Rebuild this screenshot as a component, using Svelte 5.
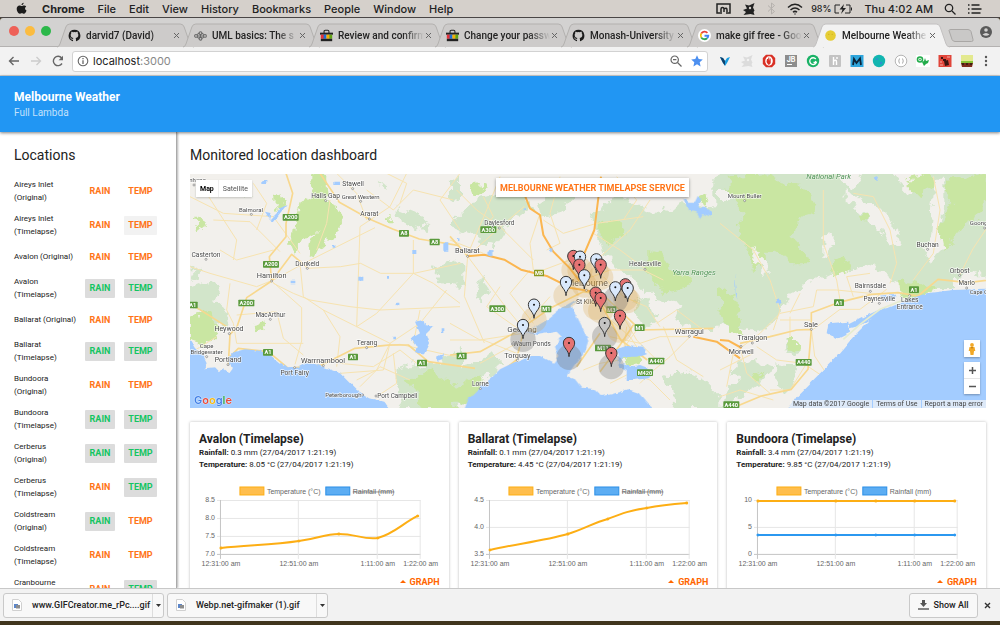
<script>
  const menus = ['File', 'Edit', 'View', 'History', 'Bookmarks', 'People', 'Window', 'Help'];

  const tabs = [
    { icon: 'github', title: 'darvid7 (David)' },
    { icon: 'uml', title: 'UML basics: The s' },
    { icon: 'bag', title: 'Review and confirm' },
    { icon: 'bag', title: 'Change your passw' },
    { icon: 'github', title: 'Monash-University' },
    { icon: 'google', title: 'make gif free - Goo' },
    { icon: 'sun', title: 'Melbourne Weathe', active: true }
  ];

  const extensions = ['vee', 'cat', 'opera', 'jb', 'gram', 'honey', 'm', 'teal', 'json', 'sprout', 'red', 'grass'];

  const locations = [
    { name: 'Aireys Inlet (Original)' },
    { name: 'Aireys Inlet (Timelapse)', hover: true },
    { name: 'Avalon (Original)' },
    { name: 'Avalon (Timelapse)', rain: true, temp: true },
    { name: 'Ballarat (Original)' },
    { name: 'Ballarat (Timelapse)', rain: true, temp: true },
    { name: 'Bundoora (Original)' },
    { name: 'Bundoora (Timelapse)', rain: true, temp: true },
    { name: 'Cerberus (Original)', rain: true, temp: true },
    { name: 'Cerberus (Timelapse)', temp: true },
    { name: 'Coldstream (Original)', rain: true },
    { name: 'Coldstream (Timelapse)' },
    { name: 'Cranbourne (Original)', temp: true }
  ];

  const cards = [
    {
      name: 'Avalon (Timelapse)', rain: '0.3 mm', temp: '8.05 °C', struck: true,
      ticks: [['8.5', 20], ['8.0', 38], ['7.5', 56], ['7.0', 74]],
      lines: [{ color: '#fdae14', d: 'M31 68C57 65 83 65 109 61C128 59 134 54 149 54C166 54 174 60 188 58C204 54 212 44 228 36', pts: [[31, 68], [109, 61], [149, 54], [188, 58], [228, 36]] }]
    },
    {
      name: 'Ballarat (Timelapse)', rain: '0.1 mm', temp: '4.45 °C', struck: true,
      ticks: [['4.5', 20], ['4.0', 47], ['3.5', 74]],
      lines: [{ color: '#fdae14', d: 'M31 70C57 64 84 61 109 54C126 49 134 43 149 39C162 34 172 30 188 28C202 25 214 24 228 23', pts: [[31, 70], [109, 54], [149, 39], [188, 28], [228, 23]] }]
    },
    {
      name: 'Bundoora (Timelapse)', rain: '3.4 mm', temp: '9.85 °C', struck: false,
      ticks: [['10', 20], ['5', 47], ['0', 74]],
      lines: [
        { color: '#fdae14', d: 'M31 21H228', pts: [[31, 21], [109, 21], [149, 21], [188, 21], [228, 21]] },
        { color: '#2b98f0', d: 'M31 55H228', pts: [[31, 55], [109, 55], [149, 55], [188, 55], [228, 55]] }
      ]
    }
  ];

  const times = [['12:31:00 am', 31], ['12:51:00 am', 109], ['1:11:00 am', 188], ['1:22:00 am', 231]];

  const west = {
    labels: [
      ['Stawell', 519, 138, 20], ['Halls Gap', 437, 173, 20], ['Great Western', 542, 176, 18], ['Balmoral', 213, 217, 18],
      ['Ararat', 568, 229, 20], ['Casterton', 78, 350, 20], ['Dunkeld', 382, 377, 20], ['Hamilton', 275, 415, 22],
      ['MacArthur', 271, 531, 19], ['Heywood', 147, 573, 21], ['Cape', 80, 624, 18], ['Bridgewater', 80, 642, 18],
      ['Portland', 144, 665, 21], ['Terang', 561, 615, 20], ['Warrnambool', 429, 668, 22], ['Port Fairy', 344, 704, 20],
      ['Peterborough', 490, 770, 18], ['Port Campbell', 652, 775, 19], ['enhope', 48, 126, 18]
    ],
    shields: [['A200', 332, 232], ['A200', 273, 373], ['A200', 199, 489], ['A8', 672, 280], ['A8', 764, 306], ['A1', 264, 637], ['A1', 519, 651], ['A1', 726, 669], ['A1', 38, 495]],
    dots: [[518, 146], [437, 182], [542, 184], [214, 223], [568, 237], [78, 358], [382, 385], [275, 423], [271, 538], [148, 581], [144, 674], [560, 623], [430, 677], [344, 683], [548, 765], [588, 768], [42, 135], [80, 650]]
  };
  const middle = {
    labels: [
      ['Daylesford', 148, 166, 19], ['Ballarat', 52, 249, 22], ['Healesville', 585, 289, 20], ['Melbourne', 412, 349, 26],
      ['St Kilda', 412, 403, 20], ['Geelong', 216, 487, 24], ['Waurn Ponds', 246, 528, 19], ['Torquay', 202, 563, 22],
      ['Lorne', 91, 648, 20], ['Warragul', 718, 491, 22]
    ],
    shields: [['A300', 115, 179], ['A300', 142, 416], ['M1', 289, 417], ['A1', 35, 558], ['M1', 569, 473], ['A440', 619, 573], ['M420', 585, 608], ['M11', 459, 534], ['M3', 484, 419], ['M8', 267, 309]],
    dots: [[148, 174], [53, 259], [585, 298], [409, 361], [718, 499], [202, 571], [91, 656], [188, 522]]
  };
  const east = {
    labels: [
      ['Mount Buller', 74, 84, 18], ['Buchan', 623, 231, 20], ['Orbost', 719, 308, 20], ['Marlo', 740, 346, 19],
      ['Bairnsdale', 451, 355, 20], ['Paynesville', 478, 392, 19], ['Lakes', 569, 397, 20], ['Entrance', 569, 416, 20],
      ['Sale', 273, 470, 22], ['Traralgon', 97, 511, 21], ['Morwell', 64, 551, 21], ['Goong', 776, 166, 18], ['Cape C', 776, 372, 17]
    ],
    shields: [['A1', 357, 398], ['A1', 582, 359], ['A440', 251, 577], ['A440', 34, 704]],
    dots: [[74, 92], [623, 238], [719, 316], [740, 354], [451, 364], [478, 400], [569, 377], [274, 478], [97, 519], [63, 529], [794, 174]]
  };

  const zones = [
    [372, 300, 'o'], [390, 300, 'o'], [439, 308, 'o'], [452, 322, 'o'], [403, 345, 'o'], [348, 377, 'o'], [437, 412, 'o'],
    [452, 422, 'o'], [526, 385, 'o'], [533, 392, 'o'], [496, 390, 'g'], [252, 450, 'o'], [219, 508, 'g'], [464, 500, 'g'],
    [508, 480, 'o'], [357, 562, 'g'], [484, 590, 'g']
  ];
  const pins = [
    [370, 258, 'r'], [390, 260, 'w'], [388, 284, 'r'], [439, 268, 'w'], [452, 284, 'r'], [403, 316, 'w'], [348, 336, 'w'],
    [437, 368, 'r'], [452, 384, 'r'], [526, 343, 'r'], [496, 352, 'w'], [533, 354, 'w'], [252, 404, 'w'], [219, 465, 'w'],
    [464, 459, 'g'], [510, 437, 'r'], [357, 519, 'r'], [484, 549, 'r']
  ];
  const pinFill = { r: '#e57373', w: '#d9e8fb', g: '#c4c4c4' };

  const downloads = ['www.GIFCreator.me_rPc....gif', 'Webp.net-gifmaker (1).gif'];
</script>

{#snippet places(set)}
  {#each set.shields as [t, x, y]}
    <rect x={x - (t.length > 2 ? 24 : 15)} y={y - 10} width={t.length > 2 ? 48 : 30} height="20" rx="2" fill={t === 'M8' ? '#8b9a22' : '#5a9a3c'} />
    <text class="shield" {x} y={y + 6}>{t}</text>
  {/each}
  {#each set.dots as [x, y]}
    <circle cx={x} cy={y} r="3" fill="#fff" stroke="#777" stroke-width="2" />
  {/each}
  {#each set.labels as [t, x, y, size]}
    <text class="place" {x} {y} font-size={size}>{t}</text>
  {/each}
{/snippet}

{#snippet tabIcon(name)}
  <svg class="fav" viewBox="0 0 16 16" aria-hidden="true">
    {#if name === 'github'}
      <path fill="#1b1b1b" d="M8 .8a7.3 7.3 0 0 0-2.3 14.2c.4.1.5-.2.5-.4v-1.5c-2 .4-2.5-.5-2.7-1 0-.2-.4-.8-.8-1-.3-.1-.7-.5 0-.5.6 0 1.100.6 1.200.8.7 1.200 1.900.9 2.300.7.1-.5.300-.9.500-1.100-1.700-.2-3.400-.8-3.400-3.700 0-.8.300-1.500.800-2-.100-.200-.400-1 .100-2 0 0 .600-.200 2 .700a7 7 0 0 1 3.600 0c1.400-1 2-.700 2-.700.500 1 .200 1.800.100 2 .500.500.800 1.200.800 2 0 2.900-1.700 3.500-3.400 3.700.300.200.500.700.500 1.400v2.200c0 .2.1.5.500.4A7.300 7.300 0 0 0 8 .8z" />
    {:else if name === 'uml'}
      <g fill="none" stroke="#666" stroke-width="1.300"><circle cx="2.500" cy="8.500" r="1.700" /><circle cx="13.500" cy="8.500" r="1.700" /><circle cx="8" cy="5" r="1.700" /><circle cx="8" cy="12" r="1.700" /><path d="M4 8.500h8M8 7v3M4 7l2-2M12 7l-2-2M4 10l2 1.500M12 10l-2 1.500" /></g>
    {:else if name === 'bag'}
      <path d="M5 5V3q0-1.500 1.500-1.500h3Q11 1.500 11 3v2" fill="none" stroke="#222" stroke-width="1.300" />
      <path fill="#222" d="M0 4.500h16V7H0z" /><path fill="#e53238" d="M1 7h4v5H1z" /><path fill="#1f6fd6" d="M4.500 7H8v5H4.500z" /><path fill="#f5af02" d="M8 7h4v5H8z" /><path fill="#62a516" d="M11.500 7H15v5h-3.500z" /><path fill="#222" d="M1 12h14v3H1z" />
    {:else if name === 'google'}
      <circle cx="8" cy="8" r="8" fill="#fff" /><g fill="none" stroke-width="2.200"><path stroke="#ea4335" d="M4 5.500a4.800 4.800 0 0 1 7.600-.8" /><path stroke="#fbbc05" d="M4 5.500a5 5 0 0 0 0 5" /><path stroke="#34a853" d="M4 10.500a4.800 4.800 0 0 0 7.200.9" /><path stroke="#4285f4" d="M8 8.300h4.700q0 2-1.500 3.100" /></g>
    {:else}
      <circle cx="8" cy="8" r="6.500" fill="#e6cd35" /><circle cx="6" cy="6.500" r=".6" fill="#b89600" /><circle cx="10" cy="6.500" r=".6" fill="#b89600" />
    {/if}
  </svg>
{/snippet}

<div class="screen">
  <nav class="menubar" aria-label="System menu">
    <svg class="apple" viewBox="0 0 16 18" aria-hidden="true"><path d="M11.200.5c.1 1.800-1.500 3.500-3.200 3.400C7.800 2.200 9.500.6 11.200.5zM14.800 6c-2.500 1.500-2 5 .5 6-.8 2.200-2.200 4.700-3.700 4.700-1.200 0-1.600-.8-3.100-.8s-2 .8-3.100.8C3.300 16.700 1 12.800 1 9.500c0-3 1.900-4.800 4-4.800 1.400 0 2.400.8 3.300.8.800 0 2-.9 3.700-.9 1.100 0 2.200.6 2.800 1.400z" /></svg>
    <b>Chrome</b>
    {#each menus as m}<span>{m}</span>{/each}
    <div class="status">
      <svg width="15" height="12" viewBox="0 0 15 12" fill="none" stroke="#222" stroke-width="1.500" aria-hidden="true"><path d="M4 10H1V1h13v9h-2M5 11V6q0-1.500 1.500-1.500T8 6v3M8 6q3-2 3 1v4" /></svg>
      <svg width="14" height="14" viewBox="0 0 14 14" aria-hidden="true"><path d="M3 2.500l4 1L12.500 1 11 5.500l1.500 3-1 1.500 1 3-4-1-7 1L4 10 1 8l4-1.500z" fill="#222" /><circle cx="8" cy="6" r="1.200" fill="#d5d0cb" /></svg>
      <svg width="9" height="13" viewBox="0 0 9 13" fill="none" stroke="#b5b1ad" aria-hidden="true"><path d="M1 3.500l6.500 6L4.500 12V1l3 2.500-6.500 6" /></svg>
      <svg width="16" height="12" viewBox="0 0 16 12" fill="none" stroke="#222" stroke-width="1.500" aria-hidden="true"><path d="M1 4.500q7-6.500 14 0M3.500 7q4.500-4 9 0M6 9.300q2-1.800 4 0" /><circle cx="8" cy="11" r=".7" fill="#222" stroke="none" /></svg>
      <span class="battery">98%<svg width="19" height="10" viewBox="0 0 19 10" aria-hidden="true"><path d="M6 1H1v8h4M12 1h4v8h-5M17.500 3.500v3" fill="none" stroke="#222" /><path d="M10 0L5.500 5.500h3L7 10l5-6H9z" fill="#222" /></svg></span>
      <time>Thu 4:02 AM</time>
      <svg width="12" height="12" viewBox="0 0 12 12" fill="none" stroke="#222" stroke-width="1.300" aria-hidden="true"><circle cx="5" cy="5" r="3.700" /><path d="M8 8l3.500 3.500" /></svg>
      <svg width="15" height="10" viewBox="0 0 15 10" fill="none" stroke="#222" stroke-width="1.500" aria-hidden="true"><path d="M1 1h1.500M1 5h1.500M1 9h1.500M4.500 1h8M4.500 5h10M4.500 9h9" /></svg>
    </div>
  </nav>

  <div class="tabstrip">
    <div class="lights"><i class="close"></i><i class="mini"></i><i class="full"></i></div>
    <div class="tabs">
      {#each tabs as t}
        <div class="tab" class:active={t.active}>
          <svg class="shape" viewBox="0 0 140 23" preserveAspectRatio="none" aria-hidden="true"><path d="M0 23q2 0 3-3L9 3q1-3 4-3h112q3 0 4 3l6 17q1 3 4 3" /></svg>
          {@render tabIcon(t.icon)}
          <span class="title">{t.title}</span>
          <button class="x" aria-label="Close tab"><svg width="7" height="7" viewBox="0 0 7 7"><path d="M1 1l5 5M6 1L1 6" stroke="#666" /></svg></button>
        </div>
      {/each}
    </div>
    <svg class="newtab" viewBox="0 0 26 13" aria-hidden="true"><path d="M1 1.500Q1 .5 3 .5h17q2 0 3 2l2 8q.5 2-1.500 2H7q-2 0-3-2z" fill="#c9c8c7" stroke="#a9a7a5" /></svg>
    <svg class="user" viewBox="0 0 12 12" aria-hidden="true"><circle cx="6" cy="6" r="6" fill="#5a5a5a" /><circle cx="6" cy="4" r="1.800" fill="#d3d2d1" /><path d="M2.500 8.500q3.500-3 7 0-3.500 2.500-7 0z" fill="#d3d2d1" /></svg>
  </div>

  <div class="toolbar">
    <button aria-label="Back"><svg width="12" height="10" viewBox="0 0 12 10"><path d="M11 5H1.500M5.500 1l-4 4 4 4" fill="none" stroke="#666" stroke-width="1.400" /></svg></button>
    <button aria-label="Forward"><svg width="12" height="10" viewBox="0 0 12 10"><path d="M1 5h9.500M6.500 1l4 4-4 4" fill="none" stroke="#ccc" stroke-width="1.400" /></svg></button>
    <button aria-label="Reload"><svg width="12" height="12" viewBox="0 0 12 12"><path d="M10 8.500A4.700 4.700 0 1 1 9.700 3" fill="none" stroke="#666" stroke-width="1.400" /><path d="M11 .8v4.400H6.600z" fill="#666" /></svg></button>
    <div class="omnibox">
      <svg width="12" height="12" viewBox="0 0 12 12" aria-hidden="true"><circle cx="6" cy="6" r="4.800" fill="none" stroke="#666" stroke-width="1.100" /><path d="M6 5.200V9M6 3v1.300" stroke="#666" stroke-width="1.300" /></svg>
      <a class="url" href="#top">localhost<span>:3000</span></a>
      <svg class="push" width="12" height="12" viewBox="0 0 12 12" fill="none" stroke="#666" stroke-width="1.200" aria-hidden="true"><circle cx="4.700" cy="4.700" r="3.700" /><path d="M7.500 7.500l4 4M3 4.700h3.400" /></svg>
      <svg width="12" height="12" viewBox="0 0 12 12" aria-hidden="true"><path fill="#4d90f0" d="M6 .3l1.700 3.800 4.100.4-3.100 2.800.9 4.100L6 9.200l-3.600 2.200.9-4.100L.2 4.500l4.100-.4z" /></svg>
    </div>
    <div class="extensions">
      {#each extensions as e}
        <svg viewBox="0 0 14 14" aria-hidden="true">
          {#if e === 'vee'}<path d="M2 3l3 1 2 3 2-3 3-1-3 6-2 3-2-3z" fill="#1b9de0" /><path d="M2 3l3 1 2 3v4.500L5 9z" fill="#10406b" />
          {:else if e === 'cat'}<path d="M3 2.500l4 1L12.500 1 11 5.500l1.500 3-1 1.500 1 3-4-1-7 1L4 10 1 8l4-1.500z" fill="#dcdcdc" /><circle cx="8" cy="6" r="1.200" fill="#f2f2f2" />
          {:else if e === 'opera'}<path d="M4 .8h6L13.200 4v6L10 13.200H4L.8 10V4z" fill="#d93025" /><ellipse cx="7" cy="7" rx="3.800" ry="4.700" fill="#fff" /><path d="M5 5h1v2l.3-3.500h1V7l.6-2.500h.8V9q-1 2.500-2.700 1.500L4.500 8z" fill="#d93025" />
          {:else if e === 'jb'}<path d="M1 1h12v12H1z" fill="#8d8d8d" /><text x="7" y="8" class="glyph" font-size="7">JB</text><path d="M3 10.500h5" stroke="#fff" />
          {:else if e === 'gram'}<circle cx="7" cy="7" r="6.200" fill="#19b266" /><path d="M9.800 5a3.400 3.400 0 1 0 .5 3.500H7.500M10.300 8.500l-1-1.500" fill="none" stroke="#fff" stroke-width="1.300" />
          {:else if e === 'honey'}<rect x="1" y="1" width="12" height="12" rx="1" fill="#c3c3c3" /><path d="M5.500 3v8M5.500 7q3-2 3 1v3M9 3v2" stroke="#fff" stroke-width="1.400" fill="none" />
          {:else if e === 'm'}<path d="M.5 1h13v12H.5z" fill="#2ea5dc" /><path d="M3 11l1-6 2.500 4L10 4.500l1 6.500" fill="none" stroke="#0a2338" stroke-width="1.800" />
          {:else if e === 'teal'}<circle cx="7" cy="7" r="6.200" fill="#12b5b0" /><circle cx="5" cy="5" r="1" fill="#2f8fd0" /><circle cx="9" cy="9" r="1.200" fill="#2f8fd0" />
          {:else if e === 'json'}<circle cx="7" cy="7" r="5.800" fill="#fff" stroke="#b5b5b5" /><path d="M5.500 4.500Q4 7 5.500 9.500M8.500 4.500Q10 7 8.500 9.500" fill="none" stroke="#aaa" />
          {:else if e === 'sprout'}<path d="M0 1h14v12H0z" fill="#fff" /><circle cx="4" cy="5.500" r="2.500" fill="none" stroke="#22ac4b" stroke-width="1.600" /><path d="M6 8l2 4 2-2 2-1 1-3-3 1-1-3-1 3z" fill="#22ac4b" /><circle cx="4" cy="5.500" r=".9" fill="#22ac4b" />
          {:else if e === 'red'}<path d="M.5 1h13v12H.5z" fill="#e0453a" /><path d="M3 3h2v2H3zM5 5h3v2H5zM6 7l4-1 1 5-4 1z" fill="#3a1512" /><path d="M2 8h2M9 3h3M2 11h3" stroke="#f6b0a8" />
          {:else}<path d="M1 1h12v6H1z" fill="#e3e98f" /><path d="M1 7h12v3H1z" fill="#8ac53a" /><path d="M1 9h12l-1 4H2z" fill="#7c2c1c" /><path d="M3 9v2M7 9v2M11 9v2" stroke="#2d1a10" stroke-width="1.500" />{/if}
        </svg>
      {/each}
    </div>
    <button class="more" aria-label="Menu"><svg width="4" height="12" viewBox="0 0 4 12" fill="#555"><circle cx="2" cy="2" r="1.200" /><circle cx="2" cy="6" r="1.200" /><circle cx="2" cy="10" r="1.200" /></svg></button>
  </div>

  <div class="page" id="top">
    <header>
      <h1>Melbourne Weather</h1>
      <p>Full Lambda</p>
    </header>
    <div class="body">
      <aside>
        <h2>Locations</h2>
        <ul>
          {#each locations as l}
            <li>
              <span>{l.name}</span>
              <button class:on={l.rain}>RAIN</button>
              <button class:on={l.temp} class:hover={l.hover}>TEMP</button>
            </li>
          {/each}
        </ul>
      </aside>

      <main>
        <h2>Monitored location dashboard</h2>
        <div class="map">
          <svg class="canvas" viewBox="0 0 2388 702" preserveAspectRatio="xMidYMid slice" role="img" aria-label="Map of Victoria">
            <defs>
              <filter id="rough" x="-5%" y="-5%" width="110%" height="110%">
                <feTurbulence type="fractalNoise" baseFrequency="0.03" numOctaves="4" seed="4" />
                <feDisplacementMap in="SourceGraphic" scale="46" xChannelSelector="R" yChannelSelector="G" />
              </filter>
              <filter id="coast" x="-5%" y="-5%" width="110%" height="110%">
                <feTurbulence type="fractalNoise" baseFrequency="0.04" numOctaves="3" seed="9" />
                <feDisplacementMap in="SourceGraphic" scale="12" xChannelSelector="R" yChannelSelector="G" />
              </filter>
            </defs>
            <rect width="2388" height="702" fill="#f2f0ec" />

            <g filter="url(#rough)">
              <g transform="translate(-30 -102)">
                <path class="wood" d="M30 440l60-20 30 20-20 40 40 30 10 50-50-10-70-50zM650 200l50 20 40 20-10 30-40-10-40-30zM810 130l30-20v70l-30-10zM760 380l60-20 30 20v60l-40-10-40-10zM640 690l60-20 50 10 90-50v180H660l-10-60zM180 160l30-10 5 15-25 8zM30 380l30 20-20 20zM590 120l30 10-10 20z" />
                <path class="park" d="M385 100h50l5 80 25 20 25 45-25 45-20 5-20 30-15 30-30 5 10-70 30-25-30 15-25 20-20 40-15-35 10-60 10-45 30-20 25-15-20-45zM30 530l60-15 30 60-40 40-50-15zM280 165l25-5 5 25-15 25-15-20zM215 550l40-10 5 30-30 10zM35 240l30-10 10 25-25 20zM690 720l70-30 50 40 30 10v70H730zM615 235h20v15h-20z" />
              </g>
              <g transform="translate(780 -12)">
                <path class="wood" d="M30 130l60-50 70-10 70 10 20 40-60 20-50 80-60-10-30-20-50-20zM260 90l80-30 30 20-40 50-60 10zM420 130l100-50 100 50 70-30 130 20 50 200v130l-80 30-60 0-50-30 20-50-80-10-60-60-60-40-40-40zM70 380l30-70 20 60-30 30zM0 620l80-50 50-20 30 30-60 50-70 80H0zM640 620l60-20 60 30 60 60v30H680zM550 380l50 20 20 60-40 20z" />
                <path class="park" d="M440 170l40-20 50 30-30 30-40 10zM595 240l40 10 30 50 60 30-20 30-60 10-50-50zM0 655l50-20 40-20 10 30-30 50H0zM740 70l30 10 10 30-40-20zM515 555l50 5 5 25-40 5zM60 50l40-10 10 20-40 15z" />
              </g>
              <g transform="translate(1590 -12)">
                <path class="wood" d="M0 0h330l70 60 40-60h70l60 70 50-70h200v320l-80-20-50 60-120 0-100-60-30-10-70 10-40 10-60 30-60 30-20 40-40 60-40 20-60-20L-20 450V20zM30 600l60-30 60 20-20 50-50 30zM190 510l40 0 10 30-40 20zM30 640l50-10 0 40-60 30zM160 580l60 10 10 50-30 30-30-20z" />
                <path class="park" d="M30 20l100-10 60 30 70 10 30 60-60 40-10 60 40 40 10 30-60 0-50-40-60 60-20-70-30-50 30-50-60-60zM560 20l70-10 20 40-50 30-30-30zM680 30l120-20v120l-60 30-70 80-10-60 40-90-30-30zM340 260l40 10 0 40-40 10zM420 130l25-5v25l-20 5zM0 350l40 20 20 60 10 60-50 0L0 420zM195 510l40 0 5 25-35 5zM100 610l30-5 0 20-20 5zM530 330l70 10 60 20-60 30-60-10z" />
                <path class="gap" d="M380 60l40 30 50 20 60 60 10 50-30 10-40-60-30-40-60-30zM645 20h25v80l-10 80 10 50-40 40-20-10 20-60zM100 230l40 50 0 50-40-60zM310 210l35-10-5 40-30 20zM0 60l30 0 0 30-30 0z" />
              </g>
            </g>

            <g class="roads">
              <g transform="translate(-30 -102)">
                <path d="M30 170l100 50 150 10 80 110M30 380l60 20 140 40 50-20M120 330l50 30 110-30M60 130l110 170-10 60M280 430l60 30 50 20 120 20 90 10 240-10M382 385l100-5 60-10 60 30 100 0 140-30M275 423l110-60 200-100M275 423l90 80 0 100-20 70M100 240l110 5 90 90M530 560l-100-50-60-40-10-100M530 560l10-300 90-60 50-100M530 560l60-40 110-120 0-100M530 560l100 50-40 80-60 30M450 180l-10 70-30 80M150 430l-10 80 20 40 10 60 200 0M170 525l120-10 20 80 60 50M430 510l50 80-10 90M630 610l90-60 80-100M630 610l-20 80-130 10M700 400l60 30 80 60M470 100l60 60 30 80M560 150l80 60 60-60 120 30M620 100l60 30-20 60M840 100l-60 80 60 90M480 670l100 10 80-50 50 40M560 623l100-10 180 40M540 740l60-60 90 40M30 640l80-50M220 130l40 60-30 80M640 640l10 90-60 40M700 610l20-100" />
                <path class="main" d="M318 100l20 60-20 90 0 40-50 60 7 73M275 423l-75 50-30 90-20 20-5 90M275 423l60-80 47 40M145 655l30-30 90 10 60 50 100-10 100-50 100-10 60 0 60 50 140 20M568 237l70 30 80 30 120 20M568 237l-90-50-60-90M30 490l110 70" />
              </g>
              <g transform="translate(780 -12)">
                <path d="M53 259l100-90 70-60M53 259l-10 120 60 140M53 259l120 160 50 60M20 60l60 60 70 50 100 100M150 20l-40 100-60 140M280 150l60 40 100-30 140-20M270 130l-30 90 10 80M330 20l-30 110 30 90-40 20M400 240l-40 30-80 30M430 190l80 50 80 60M440 270l100-90 60-90M400 330l80-30 100 0 60 30M460 320l60 60 70 30 40 60M450 400l70 40 40 70 60 60M470 440l70 60 40 60M480 500l90 20 60-20 90 0M560 480l-50 70M620 460l60-40 80 60M640 470l40 100 80 50M720 500l-60 60-60 50-30 30M90 580l110-60 30 10M0 460l90 50 130-20M0 510l100 0 100 40M150 350l-40 60 100 70M240 300l-60 70 70 90M300 380l-90 100M530 470l-10 80M400 600l50-20 60-10M480 640l60-30 60 20 60 60M500 20l60 70-40 60M100 80l30 60-40 50M0 210l100 40" />
                <path class="main" d="M53 259l-53-60M0 555l90-10 110-60 100-70 100-50 60 10 90 85 20 20 220-5M219 490l-20 80-100 80M452 400l60 110 80 60M450 490l-70 100M550 465l-40 60-60 80" />
                <path class="highway" d="M53 259l50-5 60 15 50 30 80 20 70 35 60 10M220 65l20 50 30 20 10 60 30 50 50 50 30 40M453 20l-20 160-30 70M730 500l70 15 70 50" />
              </g>
              <g transform="translate(1590 -12)">
                <path d="M0 160l100 80 50 90 30 90-20 60M180 430l100-20 10-50 60 0 100 10M310 60l0 160 40 110 10 60M400 70l60 10 50 100 20 100-20 60M640 20l20 100-20 130-60 80M719 316l40-80 40-60M210 440v60M280 478l80-60 60 0 80-60M180 430l-60 60-80 60-20 100M110 530l60 40 80 10 60 40M60 530l20 80 70 60M274 478l10 80 40 60M180 450l90 0M400 380l-20-60 70-10M0 600l100-50M150 660l60 0 50-80M0 680l60-20 100 30M240 370l-30 60" />
                <path class="main" d="M60 520l90-20 80-20 44-2 0-50 80-30 100-25 80-5 60 10 60-50 90 10 160-20M274 478l-10 120-50 60-90 20-120 50" />
                <path class="highway" d="M0 510l25 2 40 22" />
              </g>
            </g>

            <g class="water" filter="url(#coast)">
              <g transform="translate(-30 -102)">
                <path d="M0 600h30l15 25 20 15 15 30-8 15 33-3 15 15 10-12 15 12 10-14-10-28 20-20 30-7 45 4 30 13 50 40 30-2 25-13 30 2 35 13 40 15 50 50 40 25 40 10 40 50H0zM705 545l25-5 5 15 25 5-20 20 10 30-15 30-30 0 5-20-15-25 25-15zM255 215l20 5-5 20 20-20 10-15 20-10-20 25-20 25-15-15zM535 410h15v12h-15zM790 310h15v22h-15zM460 125h20v10h-20zM768 650l20-10 0 20-15 5zM697 330h12v12h-12zM247 120h12v12h-12zM332 422h14v8h-14zM640 590h8v8h-8zM785 565h8v14h-8zM650 485h8v8h-8zM618 408h6v8h-6zM458 315h8v8h-8z" />
              </g>
              <g transform="translate(780 -12)">
                <path d="M385 385l-50 28-45 37-35 22-25 15 30 8 60-10 15 15-20 30 10 28-15 20-40-20-30 0-50 20-40 20-25 25-30 25-40 40-20 50h600l-40-35-30-35-30-10-50 15-30 5-20-20-40-5-20-25-25-10 25-35 30-40 10-30-15-35-20-40-15-30zM500 540l30-15 50 5 10 20-30 10-40 0-10 20 30 10 30-5 40 15-10 25-50 5-20 0 0-30-20-10zM700 85l15 10 20 0 10-20 8 15-8 20 20 0 20 15 0 15-25-8-10 15-10-20-25-5zM115 240h12v16h-12zM222 115h8v8h-8zM300 235h10v10h-10zM20 205h8v8h-8z" />
              </g>
              <g transform="translate(1590 -12)">
                <path d="M190 740l40-60 50-50 70-70 50-60 50-50 50-35 60-25 60-20 80-10 130-5v400zM325 460l60-5 5 30-40 20-30-15zM390 462l40-20 40-20 40-10-40 25-50 30-30 8zM175 385l8 10-8 10-8-8zM45 310l6 60-3 20zM480 380l40-5 10 8-30 12zM460 20l15-5-5 15z" />
              </g>
            </g>
            <path d="M1960 508l50-45 60-45 70-28" transform="translate(0 -12)" fill="none" stroke="#e6ecd0" stroke-width="5" />

            <g transform="translate(-30 -102)">{@render places(west)}</g>
            <g transform="translate(780 -12)">{@render places(middle)}<text class="park-name" x="732" y="314">Yarra Ranges</text></g>
            <g transform="translate(1590 -12)">{@render places(east)}<text class="park-name" x="326" y="28">National Park</text></g>

            <g transform="translate(780 -12)">
              {#each zones as [x, y, kind]}
                <circle cx={x} cy={y} r="38" fill={kind === 'o' ? '#d9a441' : '#777'} fill-opacity={kind === 'o' ? 0.24 : 0.34} />
              {/each}
              {#each pins as [x, y, kind]}
                <path d="M{x} {y + 41}C{x - 1} {y + 20} {x - 17} {y + 16} {x - 17} {y}A17 17 0 0 1 {x + 17} {y}C{x + 17} {y + 16} {x + 1} {y + 20} {x} {y + 41}z" fill={pinFill[kind]} stroke="#333" stroke-width="3" />
                <circle cx={x} cy={y} r="3" fill="#111" />
              {/each}
            </g>
          </svg>
          <div class="types"><button class="current">Map</button><button>Satellite</button></div>
          <button class="service">MELBOURNE WEATHER TIMELAPSE SERVICE</button>
          <div class="google"><span class="b">G</span><span class="r">o</span><span class="y">o</span><span class="b">g</span><span class="g">l</span><span class="r">e</span></div>
          <div class="controls">
            <button aria-label="Street View"><svg width="8" height="12" viewBox="0 0 8 12"><circle cx="4" cy="2" r="1.900" fill="#f2a826" /><path d="M1.500 4h5l.8 4H6l-.5 4h-3L2 8H.7z" fill="#f2a826" /><path d="M3 4h2L4 6z" fill="#b9770e" /></svg></button>
            <div class="zoom">
              <button aria-label="Zoom in"><svg width="7" height="7" viewBox="0 0 7 7"><path d="M3.500 0v7M0 3.500h7" stroke="#555" stroke-width="1.500" /></svg></button>
              <button aria-label="Zoom out"><svg width="7" height="7" viewBox="0 0 7 7"><path d="M0 3.500h7" stroke="#555" stroke-width="1.500" /></svg></button>
            </div>
          </div>
          <div class="legal"><span>Map data ©2017 Google</span><a href="#top">Terms of Use</a><a href="#top">Report a map error</a></div>
        </div>

        <div class="cards">
          {#each cards as c}
            <article>
              <h3>{c.name}</h3>
              <p><b>Rainfall:</b> {c.rain} (27/04/2017 1:21:19)</p>
              <p><b>Temperature:</b> {c.temp} (27/04/2017 1:21:19)</p>
              <svg class="chart" viewBox="0 0 259 90" role="img" aria-label="Weather chart for {c.name}">
                <rect x="50" y="7" width="24" height="8" fill="#ffbe4d" stroke="#fdae14" />
                <text x="77" y="14">Temperature (°C)</text>
                <rect x="136" y="7" width="24" height="8" fill="#5cadf3" stroke="#2b8fe6" />
                <text x="163" y="14" class:struck={c.struck}>Rainfall (mm)</text>
                {#each c.ticks as [t, y]}
                  <path d="M27 {y + 0.5}H231" stroke={y === 74 ? '#c4c4c4' : '#e6e6e6'} />
                  <text x="25" y={y + 2} text-anchor="end">{t}</text>
                {/each}
                {#each times as [t, x]}
                  <path d="M{x - 0.5} 20V79" stroke={x === 31 ? '#c4c4c4' : '#e6e6e6'} />
                  <text {x} y="86" text-anchor="middle">{t}</text>
                {/each}
                {#each c.lines as line}
                  <path d={line.d} fill="none" stroke={line.color} stroke-width="2" />
                  {#each line.pts as [x, y]}<circle cx={x} cy={y} r="1.500" fill={line.color} />{/each}
                {/each}
              </svg>
              <button class="graph"><svg width="6" height="3" viewBox="0 0 6 3" aria-hidden="true"><path d="M0 3l3-3 3 3z" fill="#f60" /></svg>GRAPH</button>
            </article>
          {/each}
        </div>
      </main>
    </div>
  </div>

  <footer>
    {#each downloads as d}
      <div class="download">
        <button class="file"><svg width="10" height="12" viewBox="0 0 10 12" aria-hidden="true"><path d="M.5.5h6l3 3v8h-9z" fill="#fff" stroke="#d0d0d0" /><path d="M2 5h4v4H2z" fill="#5c86c9" /><path d="M4 6h4v3.500H4z" fill="#8d8d8d" /></svg>{d}</button>
        <button class="drop" aria-label="Download options"><svg width="5" height="3" viewBox="0 0 5 3"><path d="M0 0h5L2.500 3z" fill="#333" /></svg></button>
      </div>
    {/each}
    <button class="all"><svg width="11" height="10" viewBox="0 0 11 10" aria-hidden="true"><path d="M4 0h3v3h2L5.500 7 2 3h2z" fill="#555" /><path d="M0 9h11" stroke="#555" stroke-width="1.400" /></svg>Show All</button>
    <button class="dismiss" aria-label="Close downloads bar"><svg width="7" height="7" viewBox="0 0 7 7"><path d="M1 1l5 5M6 1L1 6" stroke="#333" stroke-width="1.400" /></svg></button>
  </footer>
</div>

<style>
  :global(body) { margin: 0; }
  * { box-sizing: border-box; }
  .screen { height: 100vh; display: flex; flex-direction: column; background: #40351d; padding-bottom: 4px; font-family: Inter, sans-serif; color: #222; overflow: hidden; }
  button { border: 0; background: none; padding: 0; font: inherit; color: inherit; display: flex; align-items: center; justify-content: center; cursor: pointer; }
  svg { display: block; flex: none; }
  h1, h2, h3, p, ul { margin: 0; padding: 0; }

  .menubar { height: 18px; flex: none; display: flex; align-items: center; gap: 13px; padding: 0 18px 0 16px; background: #d5d0cb; border-bottom: 1px solid #4a4646; font-size: 11px; font-weight: 500; white-space: nowrap; }
  .menubar b { font-weight: 700; margin-left: 2px; }
  .apple { width: 11px; height: 13px; fill: #1c1c1c; }
  .status { margin-left: auto; display: flex; align-items: center; gap: 11px; }
  .battery { display: flex; align-items: center; gap: 3px; font-size: 9px; margin-left: -3px; }

  .tabstrip { height: 29px; flex: none; display: flex; align-items: center; background: #d3d2d1; border-bottom: 1px solid #b4b2b1; padding-right: 8px; border-top-left-radius: 3px; border-top-right-radius: 3px; }
  .lights { display: flex; gap: 6px; width: 60px; padding: 0 0 3px 9px; flex: none; }
  .lights i { width: 10px; height: 10px; border-radius: 50%; }
  .close { background: #ee6158; }
  .mini { background: #fbbc40; }
  .full { background: #2cb84a; }
  .tabs { flex: 0 1 882px; display: flex; align-self: flex-end; height: 23px; min-width: 0; margin-bottom: -1px; }
  .tab { position: relative; flex: 1 1 0; min-width: 0; display: flex; align-items: center; gap: 5px; padding: 0 4px 0 8px; z-index: 0; }
  .shape { position: absolute; inset: 0 auto auto -3px; width: calc(100% + 12px); height: 23px; z-index: -1; fill: #cdcbca; stroke: #b2b0ae; overflow: visible; }
  .active { z-index: 1; }
  .active .shape { fill: #f2f2f2; stroke: #c2c0bf; }
  .fav { width: 13px; height: 13px; }
  .title { flex: 1; min-width: 0; margin-right: -6px; overflow: hidden; white-space: nowrap; font-family: Roboto, sans-serif; font-size: 10px; font-weight: 500; mask-image: linear-gradient(to right, #000 75%, transparent); }
  .x { width: 11px; height: 12px; }
  .newtab { width: 26px; height: 13px; margin: 6px 0 0 6px; }
  .user { width: 12px; height: 12px; margin-left: auto; }

  .toolbar { height: 29px; flex: none; display: flex; align-items: center; gap: 10px; padding: 0 12px 0 8px; background: #f2f2f2; border-bottom: 1px solid #cfcfcf; }
  .omnibox { flex: 1; height: 21px; display: flex; align-items: center; gap: 4px; padding: 0 4px; margin-left: -2px; background: #fff; border: 1px solid #d2d2d2; border-radius: 3px; font-size: 11px; }
  .url { color: #222; text-decoration: none; }
  .url span { color: #888; }
  .push { margin-left: auto; margin-right: 5px; }
  .extensions { display: flex; gap: 8px; }
  .extensions svg { width: 14px; height: 14px; }
  .glyph { font-weight: 700; fill: #fff; text-anchor: middle; }

  .page { flex: 1; min-height: 0; display: flex; flex-direction: column; background: #fff; font-family: Roboto, sans-serif; }
  header { flex: none; height: 56px; padding: 14px 14px 0; background: #2196f3; color: #fff; box-shadow: 0 1px 3px rgba(0, 0, 0, .5); z-index: 2; }
  h1 { font-size: 12px; line-height: 15px; font-weight: 700; }
  header p { font-size: 10px; line-height: 15px; color: #c3e1fb; }
  .body { flex: 1; min-height: 0; display: flex; overflow: hidden; }
  aside { width: 177px; flex: none; padding: 15px 19px 0 14px; border-right: 1px solid #aaa; box-shadow: 1px 0 2px rgba(0, 0, 0, .3); }
  h2 { font-size: 14px; line-height: 17px; font-weight: 400; }
  ul { list-style: none; margin-top: 10px; }
  li { display: grid; grid-template-columns: 1fr 30px 33px; column-gap: 9px; align-items: center; min-height: 29px; padding: 4px 0; }
  li span { font-size: 8px; line-height: 13px; margin-right: -2px; }
  li button { height: 19px; font-size: 9px; font-weight: 700; color: #ff7417; border-radius: 1px; }
  li .hover { background: #f2f2f2; }
  li .on { background: #dcdcdc; color: #14c562; }

  main { flex: 1; min-width: 0; padding: 15px 14px 0 13px; }
  .map { position: relative; height: 234px; margin-top: 10px; overflow: hidden; }
  .canvas { width: 100%; height: 100%; font-family: Roboto, sans-serif; }
  .wood { fill: #d2e5ca; }
  .park { fill: #c9e6a2; }
  .gap { fill: #f2f0ec; }
  .water { fill: #a3ccff; }
  .roads { fill: none; stroke: #f7e3b0; stroke-width: 3; stroke-linejoin: round; }
  .main { stroke: #f8d88e; stroke-width: 5; }
  .highway { stroke: #fbb650; stroke-width: 6; }
  .place { text-anchor: middle; fill: #4a4a4a; stroke: #fff; stroke-opacity: .8; stroke-width: 4; paint-order: stroke; stroke-linejoin: round; }
  .shield { text-anchor: middle; fill: #fff; font-size: 17px; font-weight: 700; }
  .park-name { text-anchor: middle; fill: #4f9355; font-size: 23px; font-style: italic; stroke: #fff; stroke-opacity: .5; stroke-width: 3; paint-order: stroke; }
  .types { position: absolute; left: 6px; top: 6px; display: flex; background: #fff; box-shadow: 0 1px 2px rgba(0, 0, 0, .2); font-size: 7px; }
  .types button { height: 17px; padding: 0 4px; color: #555; }
  .types .current { font-weight: 700; color: #000; border-right: 1px solid #eee; }
  .service { position: absolute; left: 306px; top: 4px; height: 19px; padding: 0 4px; background: #fff; color: #ff7417; font-size: 9px; font-weight: 700; white-space: nowrap; box-shadow: 0 1px 3px rgba(0, 0, 0, .4); }
  .google { position: absolute; left: 4px; bottom: 0; font-family: Inter, sans-serif; font-size: 11px; line-height: 16px; font-weight: 600; text-shadow: 0 0 1px #fff, 0 0 1px #fff; }
  .b { color: #3f7fe8; }
  .r { color: #e94b3c; }
  .y { color: #f5b912; }
  .g { color: #34a853; }
  .controls { position: absolute; right: 6px; bottom: 14px; display: grid; gap: 5px; }
  .controls button { width: 16px; height: 16px; background: #fff; }
  .controls > button { height: 17px; box-shadow: 0 1px 2px rgba(0, 0, 0, .3); }
  .zoom { background: #fff; box-shadow: 0 1px 2px rgba(0, 0, 0, .3); }
  .zoom button + button { border-top: 1px solid #e6e6e6; }
  .legal { position: absolute; right: 0; bottom: 0; display: flex; gap: 1px; font-size: 7px; line-height: 8px; color: #444; }
  .legal > * { padding: 0 3px; background: rgba(245, 245, 245, .7); color: #444; text-decoration: none; }

  .cards { display: grid; grid-template-columns: repeat(3, minmax(0, 1fr)); gap: 10px; margin-top: 14px; }
  article { padding-top: 9px; min-width: 0; background: #fff; box-shadow: 0 0 3px rgba(0, 0, 0, .28); border-radius: 1px; }
  h3 { padding: 0 9px; font-size: 12px; line-height: 16px; font-weight: 700; }
  article p { padding: 0 9px; font-size: 8px; line-height: 12px; }
  .chart { width: 100%; margin-top: 9px; font-family: "Liberation Sans", sans-serif; font-size: 7px; fill: #666; }
  .struck { text-decoration: line-through; }
  .graph { margin: 5px 9px 12px auto; gap: 4px; font-size: 9px; line-height: 14px; font-weight: 700; color: #f60; }

  footer { height: 33px; flex: none; position: relative; z-index: 3; display: flex; align-items: center; gap: 3px; padding: 0 9px 0 3px; background: #f2f2f2; border-top: 1px solid #c8c8c8; font-family: Roboto, sans-serif; font-size: 9px; font-weight: 500; }
  .download { width: 161px; height: 25px; display: flex; border: 1px solid #c9c9c9; border-radius: 3px; background: #f8f8f8; }
  .file { flex: 1; min-width: 0; justify-content: flex-start; gap: 10px; padding-left: 8px; white-space: nowrap; }
  .drop { width: 11px; border-left: 1px solid #ddd; }
  .all { margin-left: auto; width: 69px; height: 25px; gap: 4px; border: 1px solid #c9c9c9; border-radius: 3px; background: #f8f8f8; }
  .dismiss { margin-left: 2px; width: 8px; height: 12px; }
</style>
